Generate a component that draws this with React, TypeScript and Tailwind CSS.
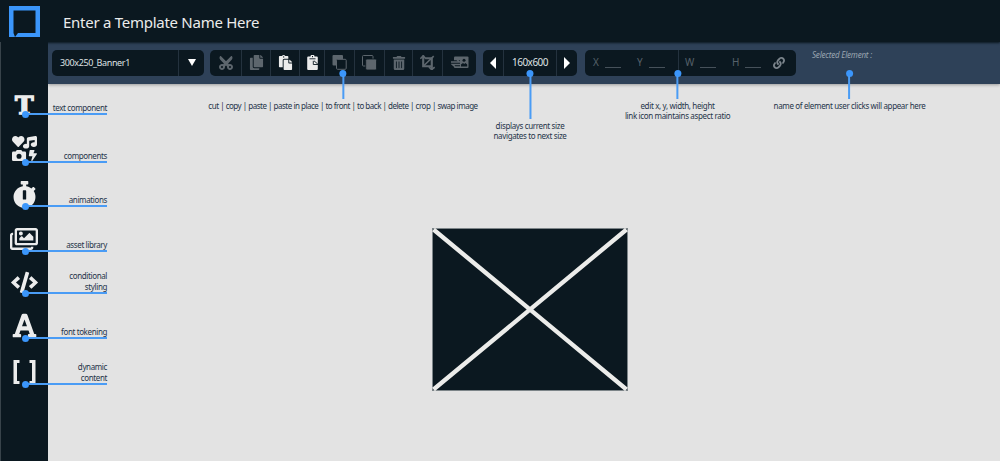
import type { ReactNode } from 'react';
import {
  FaCode,
  FaCopy,
  FaCut,
  FaFont,
  FaIcons,
  FaLink,
  FaPaste,
  FaRegImages,
  FaStopwatch,
  FaTrashAlt,
} from 'react-icons/fa';

interface SidebarItem {
  id: string;
  label: string[];
  icon: ReactNode;
  /** Height of the row; the callout line runs along its bottom edge. */
  height: string;
}

function BracketsIcon() {
  return (
    <svg viewBox="0 0 23 24" className="absolute bottom-0 left-[13px] h-6 w-[23px]" fill="none" stroke="currentColor" strokeWidth="3">
      <path d="M6.500 1.500H2v21h4.500M16.500 1.500H21v21h-4.500" />
      <path d="M2.500 1.500v21M20.500 1.500v21" />
    </svg>
  );
}

const sidebarItems: SidebarItem[] = [
  {
    id: 'text',
    label: ['text component'],
    icon: (
      <span className="absolute bottom-[-8px] left-[15px] font-['DejaVu_Serif',serif] text-[25px] leading-[32px] font-bold [-webkit-text-stroke:1.4px_#ececec]">
        T
      </span>
    ),
    height: 'h-[30px]',
  },
  { id: 'components', label: ['components'], icon: <FaIcons className="absolute bottom-px left-[12px] size-[25px]" />, height: 'h-[48px]' },
  { id: 'animations', label: ['animations'], icon: <FaStopwatch className="absolute bottom-[-2px] left-[11px] size-[27px]" />, height: 'h-[44px]' },
  { id: 'assets', label: ['asset library'], icon: <FaRegImages className="absolute bottom-[-2px] left-[10px] size-[28px]" />, height: 'h-[45px]' },
  { id: 'conditional', label: ['conditional', 'styling'], icon: <FaCode className="absolute bottom-[-3px] left-[11px] size-[27px]" />, height: 'h-[42px]' },
  { id: 'fonts', label: ['font tokening'], icon: <FaFont className="absolute bottom-[-1px] left-[11px] size-[27px]" />, height: 'h-[45px]' },
  { id: 'dynamic', label: ['dynamic', 'content'], icon: <BracketsIcon />, height: 'h-[46px]' },
];

function PasteInPlaceIcon() {
  return (
    <svg viewBox="0 0 11 15" className="h-[15px] w-[11px]">
      <path
        d="M1.200 1.500h2.300a2 1.800 0 0 1 4 0h2.300a1 1 0 0 1 1 1V14a1 1 0 0 1-1 1H1.200a1 1 0 0 1-1-1V2.500a1 1 0 0 1 1-1z"
        fill="currentColor"
      />
      <path d="M2.500 3.800h6" stroke="#0b1820" strokeWidth="0.900" />
      <path d="M5.500 1v1.200" stroke="#0b1820" />
      <path d="M6.300 5.800v3.700h4.700M7 5.800l3.800 3.300" fill="none" stroke="#0b1820" strokeWidth="0.900" />
    </svg>
  );
}

function ToFrontIcon() {
  return (
    <svg viewBox="0 0 15 15" className="size-[15px]">
      <rect x="0.500" y="0" width="10.500" height="10.500" rx="1" fill="currentColor" />
      <rect x="4.500" y="4.300" width="9.700" height="10" rx="1" fill="#0b1820" stroke="currentColor" />
    </svg>
  );
}

function ToBackIcon() {
  return (
    <svg viewBox="0 0 15 15" className="size-[15px]">
      <rect x="0.500" y="0.500" width="10.500" height="10.500" rx="1" fill="none" stroke="currentColor" />
      <rect x="3.700" y="4" width="10.800" height="11" rx="1.200" fill="currentColor" stroke="#0b1820" strokeWidth="0.800" />
    </svg>
  );
}

function CropIcon() {
  return (
    <svg viewBox="0 0 14 14" className="size-[15px]" fill="none" stroke="currentColor" strokeWidth="2">
      <path d="M3 .5v10h8M5 3h6v11" />
      <path d="M.3 3.500L3 .8l2.500 2.700M8.300 11.300L11 13.500l2.700-2.200M3.500 10L12.800 1" strokeWidth="1.500" />
    </svg>
  );
}

function SwapImageIcon() {
  return (
    <svg viewBox="0 0 18 13" className="h-[13px] w-[18px]">
      <rect x="3" y="0.500" width="14.500" height="11.500" rx="1" fill="currentColor" />
      <circle cx="13" cy="4.300" r="1.500" fill="#0b1820" />
      <path d="M10 10.500v-2l2-1.500 1.200 1 1.300-1 1.700 1.500v2z" fill="#0b1820" />
      <path d="M1 5.800h8M1 8.800h8" stroke="#0b1820" strokeWidth="3" />
      <path d="M0 6h8.500L6 3.800M9.500 8.500H1.500L4 10.700" fill="none" stroke="currentColor" strokeWidth="1.500" />
    </svg>
  );
}

const tools = [
  { id: 'cut', icon: <FaCut className="ml-px size-[16px] -rotate-90" />, width: 'w-[32px]', active: false },
  { id: 'copy', icon: <FaCopy className="size-[15px]" />, width: 'w-[29px]', active: false },
  { id: 'paste', icon: <FaPaste className="size-[15px]" />, width: 'w-[29px]', active: true },
  { id: 'paste-in-place', icon: <PasteInPlaceIcon />, width: 'w-[25px]', active: true },
  { id: 'to-front', icon: <ToFrontIcon />, width: 'w-[30px]', active: false },
  { id: 'to-back', icon: <ToBackIcon />, width: 'w-[30px]', active: false },
  { id: 'delete', icon: <FaTrashAlt className="size-[14px]" />, width: 'w-[28px]', active: false },
  { id: 'crop', icon: <CropIcon />, width: 'w-[30px]', active: false },
  { id: 'swap', icon: <SwapImageIcon />, width: 'w-[33px]', active: false },
];

function ToolGroup({ className, children }: { className: string; children: ReactNode }) {
  return (
    <div className={`flex h-[26px] shrink-0 items-stretch rounded-[5px] bg-[#0b1820] ${className}`}>
      {children}
    </div>
  );
}

function Field({ label, className }: { label: string; className: string }) {
  return (
    <div className={`flex shrink-0 items-center text-[#56616a] ${className}`}>
      <span className="text-[10px]">{label}</span>
      <span className="mt-[9px] ml-auto h-px w-4 bg-[#46515a]" />
    </div>
  );
}

interface CalloutProps {
  left: string;
  line: string;
  lines: string[];
  tracking?: string;
}

/** Dot on the toolbar with a line going down to its explanation. */
function Callout({ left, line, lines, tracking = 'tracking-[-0.35px]' }: CalloutProps) {
  return (
    <div className={`absolute top-[70px] flex -translate-x-1/2 flex-col items-center ${left}`}>
      <span className="size-[7px] rounded-full bg-[#3b96fb]" />
      <span className={`-mt-px w-[2px] bg-[#4a9cf5] ${line}`} />
      <p className={`mt-[2px] text-center text-[8px] leading-[9.5px] whitespace-nowrap text-[#1f3449] ${tracking}`}>
        {lines.map((text) => (
          <span key={text} className="block">{text}</span>
        ))}
      </p>
    </div>
  );
}

export default function App() {
  return (
    <div className="relative flex h-[461px] w-[1000px] flex-col overflow-hidden bg-[#e3e3e3] font-['Noto_Sans','Open_Sans',sans-serif]">
      <header className="z-10 flex h-[42px] shrink-0 items-center bg-[#0b1820] shadow-[0_1px_2px_#0b1820]">
        <svg viewBox="0 0 31 31" className="ml-[9px] size-[31px]">
          <path fillRule="evenodd" d="M0 0h31v31H0zM4.500 4.500v22.500L6 31l3-4h17.500V4.500z" fill="#3b96fb" />
        </svg>
        <h1 className="mt-[2px] ml-[23px] text-[15px] tracking-[-0.27px] text-[#ececec]">Enter a Template Name Here</h1>
      </header>

      <div className="flex min-h-0 flex-1">
        <nav className="z-10 flex w-12 shrink-0 flex-col border-l border-[#38434a] bg-[#0b1820] pt-[42px] text-[#ececec]">
          {sidebarItems.map((item) => (
            <div key={item.id} className={`relative -ml-px shrink-0 ${item.height}`}>
              {item.icon}
              <span className="absolute bottom-[-0.5px] left-[25px] h-[1.7px] w-[82px] bg-[#4a9cf5]" />
              <span className="absolute bottom-[-3.5px] left-[22px] size-[7px] rounded-full bg-[#3b96fb]" />
              <p className="absolute right-[-59px] bottom-px text-right text-[8px] leading-[10.5px] tracking-[-0.38px] whitespace-nowrap text-[#1f3449]">
                {item.label.map((text) => (
                  <span key={text} className="block">{text}</span>
                ))}
              </p>
            </div>
          ))}
        </nav>

        <main className="flex min-w-0 flex-1 flex-col">
          <div className="flex h-[42px] shrink-0 items-start bg-[#2e4158] pt-[7.5px] pl-1 shadow-[0_1px_3px_#00000050]">
            <ToolGroup className="w-[152px]">
              <span className="flex flex-1 items-center pl-2 text-[9px] tracking-[-0.38px] text-[#dfe1e3]">300x250_Banner1</span>
              <button className="flex w-[26px] items-center justify-center border-l border-[#24323e] text-white">
                <svg viewBox="0 0 8 7" className="h-[7px] w-2" fill="currentColor"><path d="M0 0h8L4 7z" /></svg>
              </button>
            </ToolGroup>

            <ToolGroup className="ml-[6px] w-[266px]">
              {tools.map((tool) => (
                <button
                  key={tool.id}
                  className={`flex shrink-0 items-center justify-center border-r border-[#24323e] last:border-r-0 ${tool.width} ${
                    tool.active ? 'text-[#ececec]' : 'text-[#5d666d]'
                  }`}
                >
                  {tool.icon}
                </button>
              ))}
            </ToolGroup>

            <ToolGroup className="ml-[7px] w-[94px]">
              <button className="flex w-5 items-center justify-center text-white">
                <svg viewBox="0 0 6 12" className="h-3 w-[6px]" fill="currentColor"><path d="M6 0v12L0 6z" /></svg>
              </button>
              <span className="flex flex-1 items-center justify-center border-x border-[#24323e] text-[10px] tracking-[-0.5px] text-[#dfe1e3]">160x600</span>
              <button className="flex w-5 items-center justify-center text-white">
                <svg viewBox="0 0 6 12" className="h-3 w-[6px]" fill="currentColor"><path d="M0 0v12l6-6z" /></svg>
              </button>
            </ToolGroup>

            <ToolGroup className="ml-2 w-[211px] pl-2">
              <Field label="X" className="w-7" />
              <Field label="Y" className="ml-4 w-7" />
              <span className="ml-[13px] w-px bg-[#24323e]" />
              <Field label="W" className="ml-[6px] w-[31px]" />
              <Field label="H" className="ml-4 w-[29px]" />
              <span className="ml-[12px] flex items-center text-[#7b848b]"><FaLink className="size-[12px]" /></span>
            </ToolGroup>

            <p className="ml-4 text-[8px] leading-[10px] tracking-[-0.2px] text-[#9aa5b1] italic">Selected Element :</p>
          </div>

          <div className="flex flex-1 pt-[144px] pl-[384px]">
            <svg viewBox="0 0 196 163" className="h-[163px] w-[196px]">
              <rect x="0.500" y="0.500" width="195" height="162" fill="#0b1820" stroke="#7d8589" />
              <path d="M1.500 1.500l193 160M194.500 1.500l-193 160" stroke="#ececea" strokeWidth="4.400" />
            </svg>
          </div>
        </main>
      </div>

      <Callout
        left="left-[343px]"
        line="h-[23px]"
        lines={['cut | copy | paste | paste in place | to front | to back | delete | crop | swap image']}
        tracking="tracking-[-0.49px]"
      />
      <Callout left="left-[530px]" line="h-[43px]" lines={['displays current size', 'navigates to next size']} />
      <Callout left="left-[677.5px]" line="h-[23px]" lines={['edit x, y, width, height', 'link icon maintains aspect ratio']} />
      <Callout left="left-[849.5px]" line="h-[23px]" lines={['name of element user clicks will appear here']} />
    </div>
  );
}
